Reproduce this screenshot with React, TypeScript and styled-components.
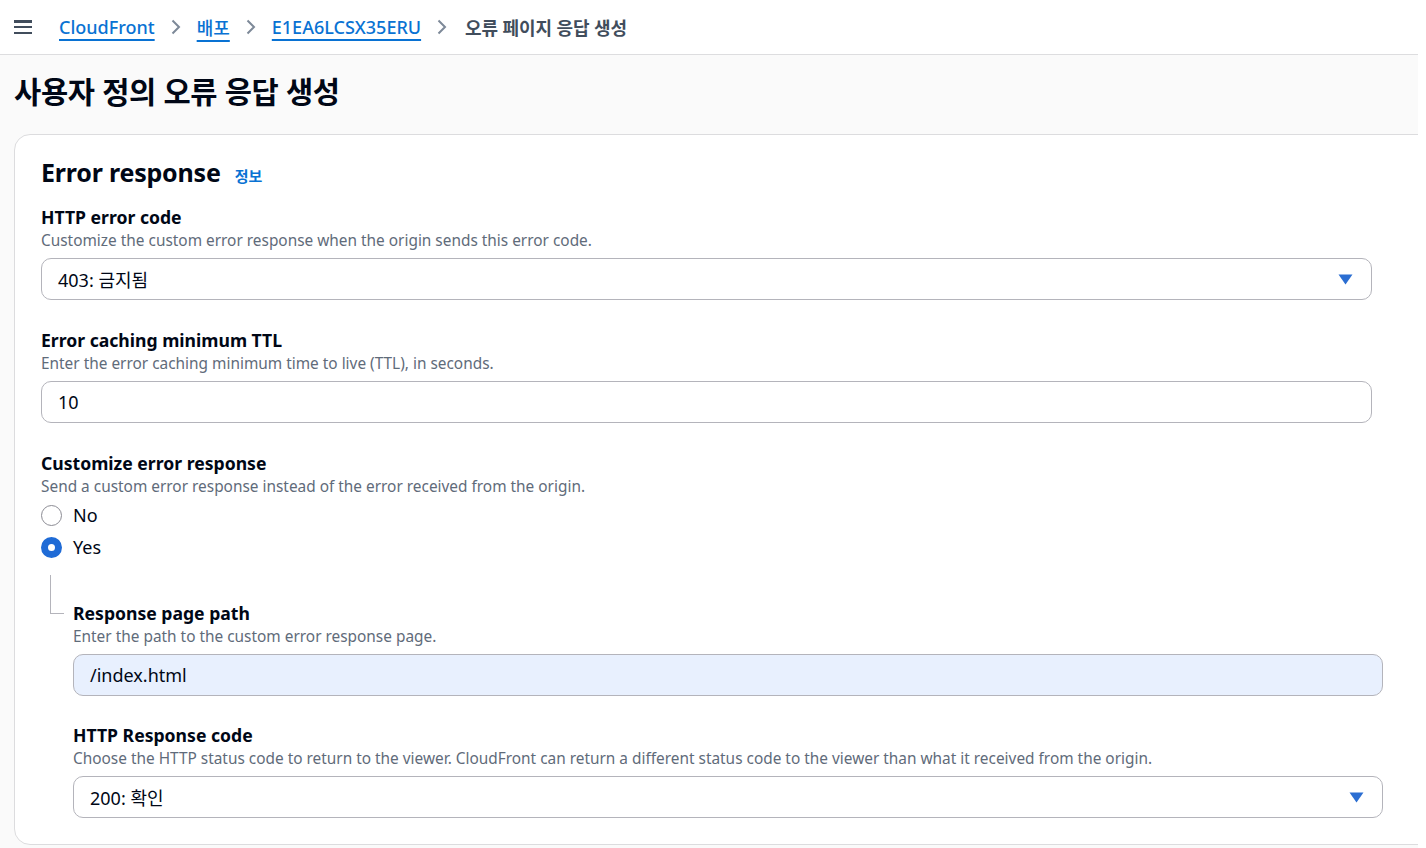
import React from "react";
import styled, { createGlobalStyle } from "styled-components";

const Global = createGlobalStyle`
  html, body { margin: 0; padding: 0; background: #ffffff; }
  body { font-family: "Noto Sans", "Noto Sans CJK KR", sans-serif; color: #000716; }
  * { box-sizing: border-box; }
`;

const Page = styled.div`
  width: 1418px;
  height: 848px;
  overflow: hidden;
  background: #fafafa;
`;

const Header = styled.header`
  height: 55px;
  background: #ffffff;
  border-bottom: 1px solid #dddddf;
  display: flex;
  align-items: center;
  padding-left: 14px;
  gap: 27px;
`;

const Burger = styled.button`
  border: 0;
  background: none;
  padding: 0;
  width: 18px;
  height: 14px;
  display: flex;
  flex-direction: column;
  justify-content: space-between;
  span {
    display: block;
    height: 2.5px;
    background: #414d5c;
  }
`;

const Crumbs = styled.nav`
  display: flex;
  align-items: center;
  gap: 16px;
  font-size: 18px;
`;

const CrumbLink = styled.a`
  color: #0972d3;
  text-decoration: underline;
  text-underline-offset: 5px;
  text-decoration-thickness: 1.5px;
  font-weight: 500;
`;

const CrumbCurrent = styled.span`
  color: #414d5c;
  font-weight: 700;
  letter-spacing: -0.1px;
  margin-left: 2px;
`;

const Chevron = () => (
  <svg width="10" height="16" viewBox="0 0 10 16" fill="none">
    <path d="M1.5 1.5 L8 8 L1.5 14.5" stroke="#7d8998" strokeWidth="2" />
  </svg>
);

const Title = styled.h1`
  margin: 0;
  padding: 14px 0 0 14px;
  height: 79px;
  font-size: 29.6px;
  font-weight: 700;
  letter-spacing: -0.3px;
  color: #000716;
`;

const Card = styled.section`
  margin-left: 14px;
  margin-right: -30px;
  background: #ffffff;
  border: 1px solid #dcdcde;
  border-radius: 16px;
  padding: 21px 0 26px 26px;
`;

const CardHead = styled.div`
  display: flex;
  align-items: baseline;
  gap: 14px;
  height: 32px;
  margin-bottom: 17px;
`;

const CardTitle = styled.h2`
  margin: 0;
  font-size: 25px;
  line-height: 32px;
  font-weight: 700;
  letter-spacing: -0.2px;
`;

const Info = styled.a`
  color: #0972d3;
  font-size: 15px;
  font-weight: 700;
`;

const Field = styled.div<{ $indent?: boolean; $gap?: number }>`
  margin-bottom: ${(p) => p.$gap ?? 28}px;
  width: ${(p) => (p.$indent ? 1310 : 1331)}px;
`;

const Label = styled.div`
  font-size: 17.6px;
  font-weight: 700;
  line-height: 24px;
`;

const Desc = styled.div`
  font-size: 15.4px;
  color: #5f6b7a;
  line-height: 24px;
  margin-bottom: 5px;
`;

const Box = styled.div<{ $filled?: boolean }>`
  height: 42px;
  border: 1px solid #b4b4bb;
  border-radius: 10px;
  background: ${(p) => (p.$filled ? "#e8f0fe" : "#ffffff")};
  display: flex;
  align-items: center;
  justify-content: space-between;
  padding: 0 18px 0 16px;
  font-size: 18px;
  color: #000716;
`;

const Caret = () => (
  <svg width="15" height="11" viewBox="0 0 15 11">
    <path d="M0.5 0.5 H14.5 L7.5 10.5 Z" fill="#2b6ed2" />
  </svg>
);

const RadioList = styled.div`
  display: flex;
  flex-direction: column;
  gap: 10px;
  margin-top: 1px;
`;

const RadioRow = styled.label`
  display: flex;
  align-items: center;
  gap: 11px;
  font-size: 18px;
  height: 22px;
`;

const RadioDot = styled.span<{ $on?: boolean }>`
  width: 21px;
  height: 21px;
  border-radius: 50%;
  border: ${(p) => (p.$on ? "7px solid #1f6bd6" : "1.5px solid #8c8c94")};
  background: #ffffff;
`;

const Nested = styled.div`
  display: flex;
  margin-top: 17px;
`;

const Connector = styled.div`
  flex: none;
  width: 14px;
  height: 39px;
  margin-left: 9px;
  border-left: 1px solid #b4b4bb;
  border-bottom: 1px solid #b4b4bb;
`;

const NestedBody = styled.div`
  margin-left: 9px;
  padding-top: 26px;
`;

export default function App() {
  return (
    <>
      <Global />
      <Page>
        <Header>
          <Burger aria-label="menu">
            <span />
            <span />
            <span />
          </Burger>
          <Crumbs>
            <CrumbLink>CloudFront</CrumbLink>
            <Chevron />
            <CrumbLink>배포</CrumbLink>
            <Chevron />
            <CrumbLink>E1EA6LCSX35ERU</CrumbLink>
            <Chevron />
            <CrumbCurrent>오류 페이지 응답 생성</CrumbCurrent>
          </Crumbs>
        </Header>
        <Title>사용자 정의 오류 응답 생성</Title>
        <Card>
          <CardHead>
            <CardTitle>Error response</CardTitle>
            <Info>정보</Info>
          </CardHead>
          <Field>
            <Label>HTTP error code</Label>
            <Desc>Customize the custom error response when the origin sends this error code.</Desc>
            <Box>
              <span>403: 금지됨</span>
              <Caret />
            </Box>
          </Field>
          <Field>
            <Label>Error caching minimum TTL</Label>
            <Desc>Enter the error caching minimum time to live (TTL), in seconds.</Desc>
            <Box>
              <span>10</span>
            </Box>
          </Field>
          <Field $gap={0}>
            <Label>Customize error response</Label>
            <Desc>Send a custom error response instead of the error received from the origin.</Desc>
            <RadioList>
              <RadioRow>
                <RadioDot />
                No
              </RadioRow>
              <RadioRow>
                <RadioDot $on />
                Yes
              </RadioRow>
            </RadioList>
          </Field>
          <Nested>
            <Connector />
            <NestedBody>
              <Field $indent $gap={27}>
                <Label>Response page path</Label>
                <Desc>Enter the path to the custom error response page.</Desc>
                <Box $filled>
                  <span>/index.html</span>
                </Box>
              </Field>
              <Field $indent $gap={0}>
                <Label>HTTP Response code</Label>
                <Desc>
                  Choose the HTTP status code to return to the viewer. CloudFront can return a different status code to
                  the viewer than what it received from the origin.
                </Desc>
                <Box>
                  <span>200: 확인</span>
                  <Caret />
                </Box>
              </Field>
            </NestedBody>
          </Nested>
        </Card>
      </Page>
    </>
  );
}
